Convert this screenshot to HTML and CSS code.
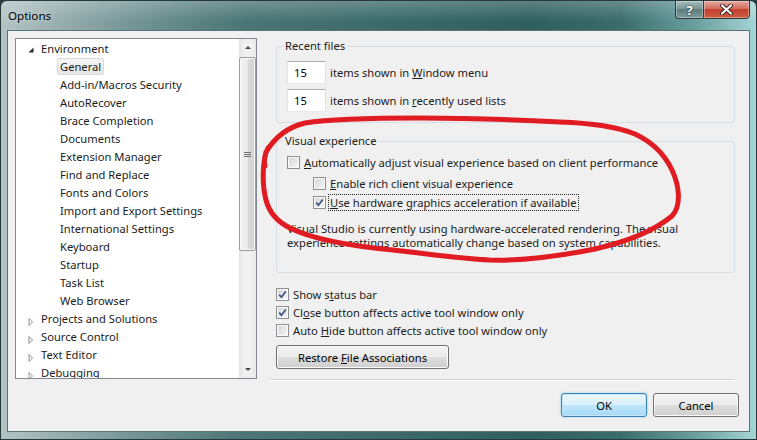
FILE: index.html
```html
<!DOCTYPE html>
<html lang="en">
<head>
    <meta charset="UTF-8">
    <meta name="viewport" content="width=device-width, initial-scale=1.0">
    <title>Options</title>
    <link rel="stylesheet" href="styles.css">
</head>
<body>
    <div class="window">
        <div class="titlebar">
            <span class="title">Options</span>
            <div class="caption-buttons">
                <span class="cap-btn help">?</span>
                <span class="cap-btn close">
                    <svg width="15" height="11" viewBox="0 0 15 11">
                        <path d="M3 1.5 L12 9.5 M12 1.5 L3 9.5" stroke="#3a2320" stroke-width="4" stroke-linecap="round"/>
                        <path d="M3 1.5 L12 9.5 M12 1.5 L3 9.5" stroke="#fff" stroke-width="2.2" stroke-linecap="round"/>
                    </svg>
                </span>
            </div>
        </div>

        <div class="client">
            <div class="main">
                <div class="tree">
                    <ul class="tree-list">
                        <li class="top">
                            <svg class="twisty" width="25" height="18"><polygon points="12.5,12.5 17.5,7.5 17.5,12.5" fill="#2a2a2a"/></svg>Environment
                        </li>
                        <li class="child"><span class="item selected">General</span></li>
                        <li class="child"><span class="item">Add-in/Macros Security</span></li>
                        <li class="child"><span class="item">AutoRecover</span></li>
                        <li class="child"><span class="item">Brace Completion</span></li>
                        <li class="child"><span class="item">Documents</span></li>
                        <li class="child"><span class="item">Extension Manager</span></li>
                        <li class="child"><span class="item">Find and Replace</span></li>
                        <li class="child"><span class="item">Fonts and Colors</span></li>
                        <li class="child"><span class="item">Import and Export Settings</span></li>
                        <li class="child"><span class="item">International Settings</span></li>
                        <li class="child"><span class="item">Keyboard</span></li>
                        <li class="child"><span class="item">Startup</span></li>
                        <li class="child"><span class="item">Task List</span></li>
                        <li class="child"><span class="item">Web Browser</span></li>
                        <li class="top">
                            <svg class="twisty" width="25" height="18"><polygon points="13,8.5 16.5,12 13,15.5" fill="none" stroke="#8c8c8c"/></svg>Projects and Solutions
                        </li>
                        <li class="top">
                            <svg class="twisty" width="25" height="18"><polygon points="13,8.5 16.5,12 13,15.5" fill="none" stroke="#8c8c8c"/></svg>Source Control
                        </li>
                        <li class="top">
                            <svg class="twisty" width="25" height="18"><polygon points="13,8.5 16.5,12 13,15.5" fill="none" stroke="#8c8c8c"/></svg>Text Editor
                        </li>
                        <li class="top">
                            <svg class="twisty" width="25" height="18"><polygon points="13,8.5 16.5,12 13,15.5" fill="none" stroke="#8c8c8c"/></svg>Debugging
                        </li>
                    </ul>
                    <div class="scrollbar">
                        <div class="sb-btn"><span class="arrow-up"></span></div>
                        <div class="sb-track">
                            <div class="sb-thumb">
                                <span class="grip"></span>
                            </div>
                        </div>
                        <div class="sb-btn"><span class="arrow-down"></span></div>
                    </div>
                </div>

                <div class="pane">
                    <fieldset class="group recent">
                        <legend>Recent files</legend>
                        <div class="num-row">
                            <input class="num" type="text" value="15">
                            <span>items shown in <u>W</u>indow menu</span>
                        </div>
                        <div class="num-row">
                            <input class="num" type="text" value="15">
                            <span>items shown in <u>r</u>ecently used lists</span>
                        </div>
                    </fieldset>

                    <fieldset class="group visual">
                        <legend>Visual experience</legend>
                        <div class="cb-row first">
                            <span class="cb"></span>
                            <span><u>A</u>utomatically adjust visual experience based on client performance</span>
                        </div>
                        <div class="cb-row sub">
                            <span class="cb"></span>
                            <span><u>E</u>nable rich client visual experience</span>
                        </div>
                        <div class="cb-row sub">
                            <span class="cb checked">
                                <svg width="11" height="11" viewBox="0 0 11 11"><path d="M2.2 5.6 L4.4 8.2 L8.8 2.4" fill="none" stroke="#3d4f82" stroke-width="1.7"/></svg>
                            </span>
                            <span class="focus"><u>U</u>se hardware graphics acceleration if available</span>
                        </div>
                        <p class="note">Visual Studio is currently using hardware-accelerated rendering. The visual experience settings automatically change based on system capabilities.</p>
                    </fieldset>

                    <div class="options">
                        <div class="cb-row">
                            <span class="cb checked">
                                <svg width="11" height="11" viewBox="0 0 11 11"><path d="M2.2 5.6 L4.4 8.2 L8.8 2.4" fill="none" stroke="#3d4f82" stroke-width="1.7"/></svg>
                            </span>
                            <span>Show s<u>t</u>atus bar</span>
                        </div>
                        <div class="cb-row">
                            <span class="cb checked">
                                <svg width="11" height="11" viewBox="0 0 11 11"><path d="M2.2 5.6 L4.4 8.2 L8.8 2.4" fill="none" stroke="#3d4f82" stroke-width="1.7"/></svg>
                            </span>
                            <span>Cl<u>o</u>se button affects active tool window only</span>
                        </div>
                        <div class="cb-row">
                            <span class="cb"></span>
                            <span>Auto <u>H</u>ide button affects active tool window only</span>
                        </div>
                    </div>

                    <button class="btn restore">Restore <u>F</u>ile Associations</button>

                    <div class="separator"></div>
                </div>
            </div>

            <div class="footer">
                <button class="btn default">OK</button>
                <button class="btn">Cancel</button>
            </div>
        </div>
    </div>

    <svg class="annotation" width="757" height="440" viewBox="0 0 757 440">
        <path d="M268 148 C262 160 262 185 266 200 C269 212 276 221 290 228 C310 238 340 245 393 250 C430 254 455 258 490 260 C520 261 560 256 595 249 C630 241 655 230 672 216 C682 205 679 185 672 170 C665 155 652 142 635 134 C615 126 590 123 560 122 C520 120 470 118 420 118 C370 118 330 119 305 123 C288 127 275 137 266 152 C264 158 264 162 265 166" fill="none" stroke="#e11b22" stroke-width="5" stroke-linecap="round" stroke-linejoin="round"/>
    </svg>
</body>
</html>
```

FILE: styles.css
```css
* {
    box-sizing: border-box;
}
body {
    margin: 0;
    width: 757px;
    height: 440px;
    overflow: hidden;
    position: relative;
    background: #2b3d3f;
    font-family: "Noto Sans", "Open Sans", sans-serif;
    font-size: 11.2px;
    color: #1b1b1b;
}
.window {
    width: 757px;
    height: 440px;
    border: 1px solid #26383a;
    border-radius: 7px 7px 0 0;
    display: flex;
    flex-direction: column;
    overflow: hidden;
    background: linear-gradient(90deg, #b4c4c5 0%, #93aaab 9%, #6c8f8f 20%, #4b7675 32%, #3c6b6a 50%, #2f5f5e 70%, #3a6c6b 82%, #6a9e9f 92%, #a6d5d7 100%);
}
.titlebar {
    height: 29px;
    display: flex;
    align-items: flex-start;
    background: linear-gradient(180deg, rgba(255, 255, 255, 0.22), rgba(255, 255, 255, 0) 70%);
}
.title {
    padding: 7px 0 0 7px;
    line-height: 16px;
    font-size: 11.6px;
    color: #000;
    text-shadow: 0 0 6px rgba(255, 255, 255, 0.7);
}
.caption-buttons {
    margin: -1px 6px 0 auto;
    display: flex;
}
.cap-btn {
    height: 19px;
    display: flex;
    align-items: center;
    justify-content: center;
    border: 1px solid #2c3a3b;
    box-shadow: inset 0 0 0 1px rgba(255, 255, 255, 0.35);
}
.help {
    width: 28px;
    border-right: none;
    border-radius: 0 0 0 4px;
    background: linear-gradient(180deg, #a6bcbc 0%, #7c9898 45%, #5f7f7f 50%, #7a9a9a 100%);
    color: #fff;
    font-weight: bold;
    font-size: 13px;
    text-shadow: 0 0 2px #1e2a2a, 0 0 1px #1e2a2a;
}
.close {
    width: 47px;
    border-radius: 0 0 4px 0;
    background: linear-gradient(180deg, #e8a79e 0%, #d26e60 45%, #c2412f 50%, #cf5b3f 100%);
}
.client {
    flex: 1;
    margin: 0 6px 7px;
    border: 1px solid #5c7375;
    background: #f0f0f0;
    display: flex;
    flex-direction: column;
}
.main {
    display: flex;
    padding: 7px 0 0 7px;
}

/* tree */
.tree {
    width: 242px;
    height: 341px;
    border: 1px solid #828790;
    background: #fff;
    display: flex;
}
.tree-list {
    flex: 1;
    list-style: none;
    margin: 0;
    padding: 0;
    overflow: hidden;
}
.tree-list li {
    height: 18px;
    line-height: 18px;
    padding-top: 1px;
    white-space: nowrap;
    display: flex;
    align-items: center;
}
.twisty {
    flex: none;
}
.child {
    padding-left: 41px;
}
.item {
    display: inline-block;
    height: 17px;
    line-height: 15px;
    padding: 0 2px;
    border: 1px solid transparent;
    border-radius: 2px;
}
.item.selected {
    background: linear-gradient(180deg, #f6f6f6, #e6e6e6);
    border-color: #d9d9d9;
}
.scrollbar {
    width: 17px;
    display: flex;
    flex-direction: column;
    background: linear-gradient(90deg, #e3e3e3, #f1f1f1 30%, #f1f1f1 70%, #e8e8e8);
}
.sb-btn {
    height: 17px;
    display: flex;
    align-items: center;
    justify-content: center;
}
.arrow-up {
    border-left: 3px solid transparent;
    border-right: 3px solid transparent;
    border-bottom: 3px solid #4a4a4a;
}
.arrow-down {
    border-left: 3px solid transparent;
    border-right: 3px solid transparent;
    border-top: 3px solid #4a4a4a;
}
.sb-track {
    flex: 1;
    padding: 1px 0 0;
}
.sb-thumb {
    height: 194px;
    border: 1px solid #9c9c9c;
    border-radius: 2px;
    background: linear-gradient(90deg, #f5f5f5, #e9e9e9 50%, #dadada 51%, #d2d2d2);
    box-shadow: inset 0 0 0 1px #fafafa;
    display: flex;
    align-items: center;
    justify-content: center;
}
.grip {
    width: 7px;
    height: 5px;
    background: linear-gradient(180deg, #6f6f6f 1px, transparent 1px, transparent 2px, #6f6f6f 2px, #6f6f6f 3px, transparent 3px, transparent 4px, #6f6f6f 4px);
}

/* right pane */
.pane {
    width: 459px;
    height: 343px;
    margin-left: 19px;
    display: flex;
    flex-direction: column;
}
.group {
    margin: 0;
    min-width: 0;
    border: 1px solid #d5dfe5;
    border-radius: 3px;
}
.group legend {
    padding: 0 2px;
    margin-left: -4px;
    line-height: 16px;
    color: #1b1b1b;
}
.recent {
    padding: 7px 10px 10px;
}
.num-row {
    display: flex;
    align-items: center;
    gap: 4px;
    height: 23px;
}
.num-row + .num-row {
    margin-top: 5px;
}
.num {
    width: 39px;
    height: 23px;
    padding: 0 0 0 6px;
    border: 1px solid;
    border-color: #abadb3 #e2e3ea #e3e9ef #e2e3ea;
    background: #fff;
    font: inherit;
    color: #000;
}
.visual {
    margin-top: 10px;
    padding: 4px 10px 22px;
}
.cb-row {
    display: flex;
    align-items: center;
    gap: 4px;
    height: 19px;
    white-space: nowrap;
}
.cb-row.first {
    margin-bottom: 2px;
}
.cb-row.sub {
    margin-left: 26px;
}
.cb {
    flex: none;
    width: 13px;
    height: 13px;
    border: 1px solid #8e8f8f;
    background: linear-gradient(135deg, #d3d5d8, #f7f7f7);
    box-shadow: inset 0 0 0 1px #fbfbfb;
    display: flex;
    align-items: center;
    justify-content: center;
}
.focus {
    display: inline-block;
    line-height: 15px;
    padding: 0 1px;
    margin-left: -2px;
    border: 1px dotted #222;
}
.note {
    margin: 10px 0 0;
    max-width: 420px;
    line-height: 14px;
}
.options {
    margin-top: 12px;
}
.options .cb-row {
    height: 18px;
}
.btn {
    width: 86px;
    height: 24px;
    padding: 0;
    border: 1px solid #707070;
    border-radius: 3px;
    background: linear-gradient(180deg, #f2f2f2 0%, #ebebeb 49%, #dddddd 50%, #cfcfcf 100%);
    box-shadow: inset 0 0 0 1px #fbfbfb;
    font: inherit;
    color: #000;
}
.btn.restore {
    width: 173px;
    margin-top: 6px;
    align-self: flex-start;
}
.btn.default {
    border-color: #3c7fb1;
    background: linear-gradient(180deg, #eaf6fd 0%, #d9f0fc 49%, #bee6fd 50%, #a7d9f5 100%);
    box-shadow: inset 0 0 0 1px #c4e9fb, 0 0 2px #7fc8ec;
}
.separator {
    margin-top: auto;
    margin-left: -6px;
    height: 2px;
    border-top: 1px solid #d0d0d0;
    border-bottom: 1px solid #fff;
}
.footer {
    display: flex;
    justify-content: flex-end;
    gap: 6px;
    padding: 12px 10px 0 0;
}

.annotation {
    position: absolute;
    left: 0;
    top: 0;
    pointer-events: none;
}
```
